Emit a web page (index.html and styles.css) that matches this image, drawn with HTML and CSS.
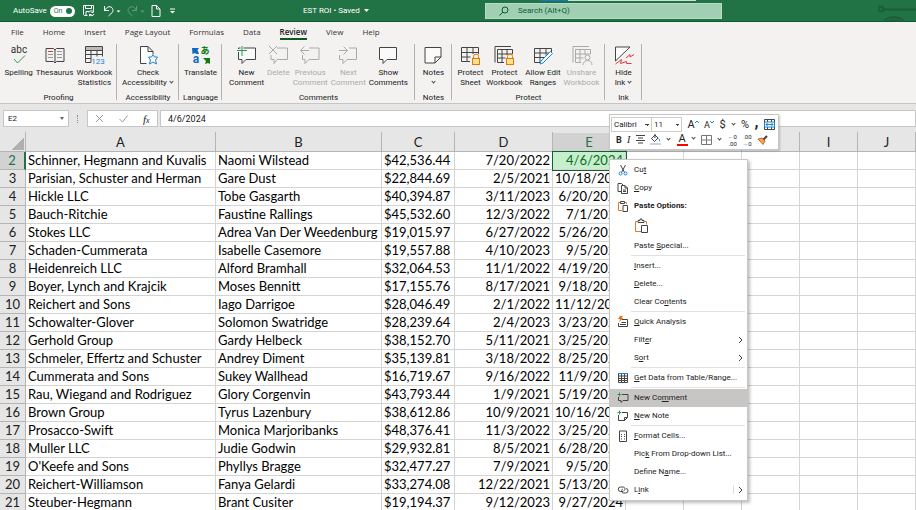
FILE: index.html
```
<!DOCTYPE html>
<html lang="en">
<head>
    <meta charset="UTF-8">
    <meta name="viewport" content="width=device-width, initial-scale=1.0">
    <title>EST ROI</title>
    <link rel="stylesheet" href="styles.css">
</head>
<body>
    <header class="titlebar">
        <div class="quick">
            <label class="autosave">AutoSave
                <span class="switch"><input type="checkbox" checked><span>On</span></span>
            </label>
            <button class="quick-btn" aria-label="Save">
                <svg width="12" height="12" viewBox="0 0 12 12"><path d="M4.5 10.5h-3l-1-1v-9h10v5M2.500.5v3h6v-3M3 10V6.500h3M6 7.500a2.500 2.500 0 0 1 4.500-.5v-1.500M10.500 7.500h-2M11 9a2.500 2.500 0 0 1-4.500.5v1.800M6.500 9.500h2"/></svg>
            </button>
            <button class="quick-btn" aria-label="Undo">
                <svg width="16" height="12" viewBox="0 0 16 12"><path d="M1.500 1v4.500H6M1.500 5.500C4 1 8 .8 9.500 3.500s-.5 4.500-4 7.500"/><path class="solid" d="M13.500 5.500h4l-2 2z"/></svg>
            </button>
            <button class="quick-btn" aria-label="Redo" disabled>
                <svg width="16" height="12" viewBox="0 0 16 12"><path d="M9.500 1v4.500H5M9.500 5.500C7 1 3 .8 1.500 3.500s.5 4.500 4 7.500"/><path class="solid" d="M13.500 5.500h4l-2 2z"/></svg>
            </button>
            <button class="quick-btn" aria-label="New">
                <svg width="10" height="12" viewBox="0 0 10 12"><path d="M1 .5h4.500l3.500 3.500v7.500H1zM5.500.5V4H9"/></svg>
            </button>
            <button class="quick-btn" aria-label="Customize toolbar">
                <svg width="7" height="6" viewBox="0 0 7 6"><path d="M1 1h5"/><path class="solid" d="M1 3h5L3.500 5.500z"/></svg>
            </button>
        </div>
        <h1 class="doc-title">EST ROI • Saved <svg width="5" height="3" viewBox="0 0 5 3"><path class="solid" d="M0 0h5L2.500 3z"/></svg></h1>
        <label class="search">
            <svg width="10" height="10" viewBox="0 0 10 10"><circle cx="6" cy="4" r="3"/><path d="M4 6 .5 9.500"/></svg>
            <input type="text" placeholder="Search (Alt+Q)" aria-label="Search">
        </label>
        <svg class="circuit" width="38" height="22" viewBox="0 0 38 22"><circle cx="3" cy="9" r="2.500"/><path d="M6 9.500h32"/><path d="M6 22a11 8 0 0 1 20 0M11 20.500h10"/></svg>
    </header>

    <nav class="tabs">
        <a href="#">File</a>
        <a href="#">Home</a>
        <a href="#">Insert</a>
        <a href="#">Page Layout</a>
        <a href="#">Formulas</a>
        <a href="#">Data</a>
        <a href="#" class="active">Review</a>
        <a href="#">View</a>
        <a href="#">Help</a>
    </nav>

    <div class="ribbon">
        <section class="group proofing">
            <div class="tools">
                <button class="tool">
                    <svg width="20" height="20" viewBox="0 0 20 20"><text x="10" y="8" text-anchor="middle">abc</text><path class="green" d="M5 14l3.500 4L16 10.500"/></svg>
                    Spelling
                </button>
                <button class="tool">
                    <svg width="20" height="20" viewBox="0 0 20 20"><path d="M1 3.500h7.500L10 5l1.500-1.500H19v13h-7.500L10 18l-1.500-1.500H1zM10 5v12"/><path d="M3 9.500h5M3 12.500h5M12 6.500h5M12 9.500h5M12 12.500h5" stroke="#999"/><path class="red" d="M3 6.500h5"/></svg>
                    Thesaurus
                </button>
                <button class="tool">
                    <svg width="20" height="20" viewBox="0 0 20 20"><path d="M2 3.500h16" stroke="#bbb" stroke-width="3"/><path d="M7 17.500H1.500v-16h17v10M1.500 5.500h17M1.500 9.500h17M1.500 13.500H7M7 5.500v12M13 5.500v6"/><text class="blue-text" x="14" y="19" text-anchor="middle">123</text></svg>
                    Workbook<br>Statistics
                </button>
            </div>
            <h2>Proofing</h2>
        </section>
        <section class="group access">
            <div class="tools">
                <button class="tool">
                    <svg width="20" height="20" viewBox="0 0 20 20"><path fill="#fff" d="M8.500 18.500H2.500v-17H10l5 5V9M10 1.500v5h5"/><path class="blue" fill="#fff" d="M15 9.500l1.500 2.500h3l-2 3 1 4-3.500-2-3.500 2 1-4-2-3h3z"/></svg>
                    Check<br>Accessibility <i class="caret"></i>
                </button>
            </div>
            <h2>Accessibility</h2>
        </section>
        <section class="group language">
            <div class="tools">
                <button class="tool">
                    <svg width="20" height="20" viewBox="0 0 20 20"><path d="M1 3h7L6.500 5 8 9H5.500L4 8 1.500 9z" fill="#1068bf" stroke="none"/><text class="kana" x="14" y="9" text-anchor="middle">あ</text><text class="latin-a" x="5" y="18" text-anchor="middle">a</text><path d="M12 13h7v6l-2-1-3 1 1-3z" fill="#107c10" stroke="none"/></svg>
                    Translate
                </button>
            </div>
            <h2>Language</h2>
        </section>
        <section class="group comments">
            <div class="tools">
                <button class="tool">
                    <svg width="20" height="20" viewBox="0 0 20 20"><path fill="#fafafa" d="M1.500 3h17v11.500H9L5 18.500v-4H1.500z"/><path class="halo" d="M0 5.500h10M5 1v10"/><path class="green" d="M0 5.500h10M5 1v10"/></svg>
                    New<br>Comment
                </button>
                <button class="tool" disabled>
                    <svg width="20" height="20" viewBox="0 0 20 20"><path d="M9 3h10.500v11.500H9L6 18.500v-4H3V10"/><path d="M1 1l8 8M9 1 1 9"/></svg>
                    Delete
                </button>
                <button class="tool" disabled>
                    <svg width="20" height="20" viewBox="0 0 20 20"><path d="M9 3h10v11.500H9L5 18.500v-4H2.500V10"/><path d="M9 5.500H.5M4.500 1.500l-4 4 4 4"/></svg>
                    Previous<br>Comment
                </button>
                <button class="tool" disabled>
                    <svg width="20" height="20" viewBox="0 0 20 20"><path d="M11 3h7.500v11.500H9L5 18.500v-4H1.500V10"/><path d="M1 5.500h8.500M5.500 1.500l4 4-4 4"/></svg>
                    Next<br>Comment
                </button>
                <button class="tool">
                    <svg width="20" height="20" viewBox="0 0 20 20"><path fill="#fafafa" d="M1.500 2.500h17v12H9L5 18.500v-4H1.500z"/></svg>
                    Show<br>Comments
                </button>
            </div>
            <h2>Comments</h2>
        </section>
        <section class="group notes">
            <div class="tools">
                <button class="tool">
                    <svg width="20" height="20" viewBox="0 0 20 20"><path fill="#fafafa" d="M2 2.500h16v9.500l-6 6H2zM12 18v-6h6"/></svg>
                    Notes<br><i class="caret"></i>
                </button>
            </div>
            <h2>Notes</h2>
        </section>
        <section class="group protect">
            <div class="tools">
                <button class="tool">
                    <svg width="20" height="20" viewBox="0 0 20 20"><path d="M10 16.500H1.500v-14h17V9M1.500 7.500h17M1.500 12h9M7 2.500v14M13 2.500V9"/><rect class="lock" x="12.500" y="13.500" width="7" height="6"/><path class="lock-bar" d="M13.500 13.500v-2a2.500 2.500 0 0 1 5 0v2"/></svg>
                    Protect<br>Sheet
                </button>
                <button class="tool">
                    <svg width="20" height="20" viewBox="0 0 20 20"><path d="M1 17.500v-16h16M10 17.500H3.500v-13h15V9M3.500 9h15M3.500 13h8M8 4.500v13M13 4.500V10"/><rect class="lock" x="12.500" y="13.500" width="7" height="6"/><path class="lock-bar" d="M13.500 13.500v-2a2.500 2.500 0 0 1 5 0v2"/></svg>
                    Protect<br>Workbook
                </button>
                <button class="tool">
                    <svg width="20" height="20" viewBox="0 0 20 20"><path d="M8 17.500H1.500v-14h17v4M1.500 8h15M1.500 12.500H11M7 3.500v14M13 3.500v7"/><path class="blue" fill="#fff" d="M17.500 6.500l2 2-9.500 9.500-3 1 1-3z"/></svg>
                    Allow Edit<br>Ranges
                </button>
                <button class="tool" disabled>
                    <svg width="20" height="20" viewBox="0 0 20 20"><path d="M1 17.500v-16h16M9 17.500H3.500v-13h15V9M3.500 9h15M3.500 13h8M8 4.500v13M13 4.500V10"/><circle cx="15.500" cy="12.500" r="2.500"/><path d="M11 20a4.500 4.500 0 0 1 9 0"/></svg>
                    Unshare<br>Workbook
                </button>
            </div>
            <h2>Protect</h2>
        </section>
        <section class="group ink">
            <div class="tools">
                <button class="tool">
                    <svg width="20" height="20" viewBox="0 0 20 20"><path fill="#fff" d="M1.500 2v14L16 2z"/><path class="red" d="M1.500 19l6-4.500-1 4 6-2v2h5M12 13l4-3.500v2.500l4-2.500"/></svg>
                    Hide<br>Ink <i class="caret"></i>
                </button>
            </div>
            <h2>Ink</h2>
        </section>
    </div>

    <div class="formula-bar">
        <div class="name-box">
            <input type="text" value="E2" aria-label="Name box">
            <i class="arrow"></i>
        </div>
        <span class="dots"></span>
        <div class="entry-buttons">
            <button aria-label="Cancel" disabled><svg width="9" height="9" viewBox="0 0 9 9"><path d="M1 1l7 7M8 1 1 8"/></svg></button>
            <button aria-label="Enter" disabled><svg width="9" height="9" viewBox="0 0 9 9"><path d="M.5 5l3 3L8.500 1.500"/></svg></button>
            <button class="fx" aria-label="Insert function">f<small>x</small></button>
        </div>
        <input class="formula" type="text" value="4/6/2024" aria-label="Formula">
    </div>

    <main class="sheet">
        <table>
            <colgroup>
                <col class="col-head"><col class="col-a"><col class="col-b"><col class="col-c"><col class="col-d"><col class="col-e">
                <col class="col-std"><col class="col-std"><col class="col-std"><col class="col-std"><col class="col-std"><col>
            </colgroup>
            <thead>
                <tr>
                    <th class="corner"></th>
                    <th>A</th><th>B</th><th>C</th><th>D</th><th class="current">E</th>
                    <th>F</th><th>G</th><th>H</th><th>I</th><th>J</th><th></th>
                </tr>
            </thead>
            <tbody id="rows"></tbody>
        </table>

        <div class="mini-bar">
            <div class="mini-row">
                <div class="fonts">
                    <select class="font-name" aria-label="Font"><option>Calibri</option></select>
                    <select class="font-size" aria-label="Font size"><option>11</option></select>
                </div>
                <button aria-label="Increase font size">A<svg class="blue" width="4" height="10" viewBox="0 0 4 10"><path d="M0 3l2-2 2 2"/></svg></button>
                <button class="smaller" aria-label="Decrease font size">A<svg class="blue" width="4" height="10" viewBox="0 0 4 10"><path d="M0 1l2 2 2-2"/></svg></button>
                <button class="with-caret">$ <i class="caret"></i></button>
                <button>%</button>
                <button class="comma">,</button>
                <button aria-label="Merge"><svg width="11" height="11" viewBox="0 0 11 11"><path d="M.5.5h10v10H.5zM3.500.5V3M7.500.5V3M3.500 8v2.500M7.500 8v2.500"/><path fill="#fff" class="blue" d="M.5 3h10v5H.5zM2 5.500h7M3.500 4 2 5.500 3.500 7M7.500 4 9 5.500 7.500 7"/></svg></button>
            </div>
            <div class="mini-row second">
                <button class="bold">B</button>
                <button class="italic">I</button>
                <button aria-label="Center"><svg width="9" height="9" viewBox="0 0 9 9"><path d="M0 .5h9M2 3h5M0 5.500h9M2 8h5"/></svg></button>
                <button class="with-caret" aria-label="Fill color"><svg width="11" height="11" viewBox="0 0 11 11"><path d="M5 1 1.500 4.500l3 3L8 4zM5 0v4"/><path class="blue" d="M8.500 4.500c1.500 1 1 3 .5 3"/><path d="M0 10h11" stroke="#bdd7ee" stroke-width="2"/></svg><i class="caret"></i></button>
                <button class="with-caret font-color">A <i class="caret"></i></button>
                <button class="with-caret" aria-label="Borders"><svg width="11" height="10" viewBox="0 0 11 10"><path d="M.5.5h10v9H.5zM5.500.5v9M.5 5h10" stroke="#777"/></svg><i class="caret"></i></button>
                <button class="decimal"><span><b>←</b>0</span><span>.00</span></button>
                <button class="decimal"><span>.00</span><span><b>→</b>0</span></button>
                <button aria-label="Format painter"><svg width="11" height="10" viewBox="0 0 11 10"><path d="M1 4l4-1 3 3-2 3.500z" fill="#f4a456" stroke="#d8641c"/><path d="M5 3l3 3" stroke="#d8641c"/><path d="M6.500 4.500 10 1" stroke-width="2"/></svg></button>
            </div>
        </div>

        <menu class="context">
            <li><button><svg width="12" height="12" viewBox="0 0 12 12"><path d="M3.500 1l4 7.500M8.500 1l-4 7.500"/><g class="blue"><circle cx="3.500" cy="9.500" r="1.500"/><circle cx="8.500" cy="9.500" r="1.500"/></g></svg><span>Cu<u>t</u></span></button></li>
            <li><button><svg width="12" height="12" viewBox="0 0 12 12"><path d="M4 9.500H1v-8h3.500L6 3M4.500 3.500H8L10.500 6v5.500h-6zM8 3.500V6h2.500M6 8h3M6 9.500h3"/></svg><span><u>C</u>opy</span></button></li>
            <li class="heading"><svg width="12" height="12" viewBox="0 0 12 12"><path class="orange" d="M5 10.500H1.500v-8h2M7.500 2.500h2V4"/><path d="M3.500 3.500v-2h4v2zM6 5.500h4.500v6H6z"/></svg><span>Paste Options:</span></li>
            <li class="paste"><button aria-label="Paste"><svg width="16" height="16" viewBox="0 0 16 16"><path class="orange" d="M7 13.500H1.500v-10h2M10.500 3.500h2v3"/><path d="M4 4.500v-2h2V1h2v1.500h2v2zM7.500 7.500h6v7h-6z"/></svg></button></li>
            <li><button><span>Paste <u>S</u>pecial...</span></button></li>
            <li class="divided"><button><span><u>I</u>nsert...</span></button></li>
            <li><button><span><u>D</u>elete...</span></button></li>
            <li><button><span>Clear Co<u>n</u>tents</span></button></li>
            <li class="divided"><button><svg width="12" height="12" viewBox="0 0 12 12"><path d="M5 3.500h5.500v7H1.500V7M3 8.500h6M4.500 6.500H9"/><path d="M3 0h3L4.500 2h2L2 6l1-3H1z" fill="#e8731c" stroke="none"/></svg><span><u>Q</u>uick Analysis</span></button></li>
            <li><button><span>Filt<u>e</u>r</span><svg class="more" width="5" height="8" viewBox="0 0 5 8"><path d="M1 1l3 3-3 3"/></svg></button></li>
            <li><button><span>S<u>o</u>rt</span><svg class="more" width="5" height="8" viewBox="0 0 5 8"><path d="M1 1l3 3-3 3"/></svg></button></li>
            <li class="divided"><button><svg width="12" height="12" viewBox="0 0 12 12"><path d="M1.500 1.500h9v9h-9zM1.500 4h9M1.500 6.500h9M1.500 8.500h9M4.500 1.500v9M7.500 1.500v9"/><path class="blue" d="M1 1.500h10"/></svg><span><u>G</u>et Data from Table/Range...</span></button></li>
            <li class="divided selected"><button><svg width="12" height="12" viewBox="0 0 12 12"><path d="M5 2.500h6v6H6l-2 2v-2H1.500V5"/><path class="green" d="M.5 2.500h4M2.500.5v4"/></svg><span>New Co<u>m</u>ment</span></button></li>
            <li><button><svg width="12" height="12" viewBox="0 0 12 12"><path d="M5 2.500h5.500v5l-3 3h-6V5M7.500 10.500v-3h3"/><path class="green" d="M.5 2.500h4M2.500.5v4"/></svg><span><u>N</u>ew Note</span></button></li>
            <li class="divided"><button><svg width="12" height="12" viewBox="0 0 12 12"><path d="M2.500 1h7v10.500h-7zM4 4.500h1M7 4.500h1M4 6.500h1M7 6.500h1M4 9h1M7 9h1"/></svg><span><u>F</u>ormat Cells...</span></button></li>
            <li><button><span>Pic<u>k</u> From Drop-down List...</span></button></li>
            <li><button><span>Define N<u>a</u>me...</span></button></li>
            <li><button><svg width="12" height="12" viewBox="0 0 12 12"><path d="M6 7.500H3.500a2 2 0 0 1 0-4.500H6c2.500 0 2.500 3.500.5 4M6 5c-2 .5-2 4 .5 4H8.500a2 2 0 0 0 .5-4.500"/></svg><span>L<u>i</u>nk</span><svg class="more split" width="5" height="8" viewBox="0 0 5 8"><path d="M1 1l3 3-3 3"/></svg></button></li>
        </menu>
    </main>

    <script src="script.js"></script>
</body>
</html>
```
FILE: styles.css
```
* {
    box-sizing: border-box;
}
body {
    margin: 0;
    height: 100vh;
    overflow: hidden;
    display: flex;
    flex-direction: column;
    font-family: Roboto, "Noto Sans", sans-serif;
    font-size: 8px;
    line-height: 10px;
    color: #222;
    background: #e6e6e6;
}
button, input, select {
    font: inherit;
    color: inherit;
    padding: 0;
    border: none;
    background: none;
}
button {
    white-space: nowrap;
}
svg {
    fill: none;
    stroke: #444;
    flex: none;
    overflow: visible;
}
svg text {
    stroke: none;
    fill: #333;
    font-size: 10px;
}
svg .blue-text {
    fill: #1c86d1;
    font-size: 8px;
}
svg .kana {
    fill: #107c10;
    font: bold 9px "Noto Sans CJK JP", sans-serif;
}
svg .latin-a {
    fill: #1068bf;
    font-size: 12px;
    font-weight: bold;
}
.blue {
    stroke: #1c86d1;
}
.green {
    stroke: #2b9a50;
}
.red {
    stroke: #e03a3e;
}
.orange {
    stroke: #e07a28;
}
.halo {
    stroke: #f3f2f1;
    stroke-width: 3;
}
.lock {
    stroke: #e07a10;
    fill: #fce08a;
}
.lock-bar {
    stroke: #e07a10;
}
.caret {
    display: inline-block;
    width: 3px;
    height: 3px;
    border: solid #444;
    border-width: 0 1px 1px 0;
    transform: rotate(45deg);
    margin: 0 1px 2px;
}

/* title bar */
.titlebar {
    position: relative;
    flex: none;
    height: 22px;
    display: grid;
    grid-template-columns: 303fr 182fr 237fr 194fr;
    align-items: center;
    color: #fff;
    background: linear-gradient(90deg, transparent 59%, #1878c8 59% 62%, #cfe0d6 62% 76%, transparent 76%) top / 100% 1px no-repeat #217346;
    border-bottom: 1px solid #0b5c2c;
}
.titlebar svg {
    stroke: #fff;
}
.titlebar .solid {
    fill: #fff;
    stroke: none;
}
.quick {
    display: flex;
    align-items: center;
    gap: 8px;
    padding-left: 13px;
}
.autosave {
    display: flex;
    align-items: center;
    gap: 3px;
}
.switch {
    display: flex;
    align-items: center;
    flex-direction: row-reverse;
    justify-content: space-between;
    width: 25px;
    height: 11px;
    padding: 0 3px 0 4px;
    border-radius: 6px;
    background: #fff;
    color: #217346;
    font-size: 7px;
}
.switch input {
    appearance: none;
    width: 6px;
    height: 6px;
    margin: 0;
    border-radius: 50%;
    background: #217346;
}
.quick-btn {
    display: flex;
}
.quick-btn:disabled {
    opacity: 0.3;
}
.doc-title {
    margin: 0;
    font-size: 8px;
    font-weight: normal;
}
.doc-title svg {
    margin: 0 0 1px 2px;
}
.search {
    display: flex;
    align-items: center;
    gap: 9px;
    height: 16px;
    padding-left: 13px;
    color: #0b5c2c;
    background: #a0cfb4;
    border: 1px solid #b5dcc5;
}
.search svg {
    stroke: #0b5c2c;
}
.search input {
    flex: 1;
    min-width: 0;
}
.search input::placeholder {
    color: #0b5c2c;
    opacity: 1;
}
.titlebar .circuit {
    justify-self: end;
    overflow: hidden;
    stroke: #1b5e3b;
    stroke-width: 2;
}

/* tabs */
.tabs {
    flex: none;
    display: flex;
    gap: 19px;
    height: 21px;
    padding: 4px 11px 0;
    font-family: "Open Sans", sans-serif;
    line-height: 12px;
    background: #f3f2f1;
}
.tabs a {
    color: #333;
    text-decoration: none;
    height: 14px;
}
.tabs .active {
    color: #222;
    font-weight: 600;
    border-bottom: 2px solid #0b5c1c;
}

/* ribbon */
.ribbon {
    flex: none;
    display: flex;
    height: 60px;
    background: #f3f2f1;
}
.group {
    position: relative;
    display: flex;
    flex-direction: column;
    justify-content: space-between;
    align-items: center;
}
.group::after {
    content: "";
    position: absolute;
    top: 1px;
    right: 0;
    bottom: 3px;
    border-right: 1px solid #b5b3b1;
}
.group h2 {
    margin: 0;
    font-size: 8px;
    font-weight: normal;
}
.proofing {
    width: 117px;
}
.access {
    width: 62px;
}
.language {
    width: 43px;
}
.comments {
    width: 193px;
}
.notes {
    width: 37px;
}
.protect {
    width: 153px;
}
.ink {
    width: 37px;
}
.tools {
    display: flex;
    align-items: flex-start;
    gap: 3px;
    padding-top: 2px;
}
.tool {
    text-align: center;
}
.tool svg {
    display: block;
    margin: 0 auto 3px;
}
.tool:disabled {
    color: #aaa;
}
.tool:disabled svg {
    stroke: #aaa;
}

/* formula bar */
.formula-bar {
    flex: none;
    display: flex;
    height: 24px;
    padding: 6px 0 0 3px;
    font-size: 8px;
    border-top: 1px solid #c8c6c4;
    background: #e6e6e6;
}
.name-box {
    display: flex;
    align-items: center;
    width: 66px;
    height: 17px;
    padding: 0 4px;
    background: #fff;
    border: 1px solid #c6c6c6;
}
.name-box input {
    flex: 1;
    min-width: 0;
}
.arrow {
    border: solid transparent;
    border-width: 3px 2px 0;
    border-top-color: #666;
}
.dots {
    width: 2px;
    margin: 5px 8px;
    height: 8px;
    border-left: 1px dotted #888;
}
.entry-buttons {
    display: flex;
    justify-content: space-around;
    align-items: center;
    width: 71px;
    height: 17px;
    background: #fff;
    border: 1px solid #c6c6c6;
}
.entry-buttons svg {
    display: block;
    stroke: #999;
}
.fx {
    font: italic 11px "Liberation Serif", serif;
}
.fx small {
    font-size: 8px;
}
.formula {
    flex: 1;
    min-width: 0;
    height: 17px;
    margin-left: 2px;
    padding-left: 7px;
    font-size: 9px;
    background: #fff;
    border: 1px solid #c6c6c6;
}

/* grid */
.sheet {
    position: relative;
    flex: 1;
    min-height: 0;
}
table {
    width: 100%;
    table-layout: fixed;
    border-collapse: separate;
    border-spacing: 0;
    font-family: Lato, sans-serif;
    font-size: 13px;
    line-height: 17px;
    color: #000;
    background: #fff;
}
.col-head {
    width: 26px;
}
.col-a {
    width: 190px;
}
.col-b {
    width: 166px;
}
.col-c {
    width: 73px;
}
.col-d {
    width: 98px;
}
.col-e {
    width: 73px;
}
.col-std {
    width: 58px;
}
th, td {
    height: 18px;
    padding: 0 2px;
    border: solid #d4d4d4;
    border-width: 0 1px 1px 0;
    white-space: nowrap;
    text-align: left;
}
th {
    padding: 0;
    font-weight: normal;
    text-align: center;
    color: #222;
    background: #e6e6e6;
    border-color: #b5b5b5;
}
thead th {
    height: 25px;
    padding-top: 7px;
    border-bottom-color: #a0a0a0;
    border-image: linear-gradient(transparent 25%, #b5b5b5 25%) 1;
}
.corner {
    background: linear-gradient(135deg, transparent 50%, #b0b0b0 50%) 11px 10px / 13px 13px no-repeat #e6e6e6;
}
.current {
    color: #217346;
    background: #d2d2d2;
}
thead .current {
    background: linear-gradient(#e6e6e6 6px, #d2d2d2 6px);
}
tbody .current {
    border-right: 2px solid #217346;
}
td.num {
    text-align: right;
}
td.money {
    text-align: right;
    padding-right: 6px;
}
td.picked {
    color: #0b6b1c;
    background: #c6efce;
    outline: 1px solid #14602f;
}

/* mini toolbar */
.mini-bar {
    position: absolute;
    top: -13px;
    left: 609px;
    width: 170px;
    height: 36px;
    padding: 2px 3px 2px 1px;
    background: #fff;
    border: 1px solid #c6c6c6;
    box-shadow: 1px 1px 2px rgba(0, 0, 0, 0.2);
}
.mini-row {
    display: flex;
    align-items: center;
    justify-content: space-between;
    height: 15px;
}
.mini-row button {
    display: flex;
    align-items: center;
    font-size: 11px;
}
.mini-row .smaller {
    font-size: 9px;
}
.mini-row .with-caret {
    gap: 5px;
}
.fonts {
    display: flex;
}
.fonts select {
    appearance: none;
    height: 15px;
    padding-left: 2px;
    border: 1px solid #ccc;
    background: conic-gradient(from -45deg at 50% 100%, #444 90deg, transparent 0) right 2px center / 4px 2px no-repeat;
}
.fonts .font-name {
    width: 41px;
}
.fonts .font-size {
    width: 30px;
    border-left: none;
}
.mini-row .comma {
    font-size: 16px;
    font-weight: bold;
    padding-bottom: 6px;
}
.mini-row .bold {
    font-size: 9px;
    font-weight: bold;
}
.mini-row .italic {
    font: italic 10px "Liberation Serif", serif;
}
.second {
    padding: 0 7px 0 5px;
}
.mini-row .font-color {
    height: 12px;
    background: linear-gradient(red, red) left bottom / 11px 2px no-repeat;
    padding: 0 0 2px 2px;
}
.mini-row .decimal {
    flex-direction: column;
    align-items: flex-end;
    font-size: 6px;
    line-height: 7px;
}
.decimal b {
    color: #1c86d1;
}

/* context menu */
.context {
    position: absolute;
    top: 32px;
    left: 609px;
    width: 139px;
    margin: 0;
    padding: 1px 0;
    list-style: none;
    background: #fff;
    border: 1px solid #c6c6c6;
    box-shadow: 2px 2px 3px rgba(0, 0, 0, 0.25);
}
.context button, .heading {
    display: grid;
    grid-template-columns: 12px 1fr auto;
    align-items: center;
    gap: 5px;
    width: 100%;
    height: 18px;
    padding: 0 4px 0 7px;
    text-align: left;
}
.context span {
    grid-column: 2;
    grid-row: 1;
}
.context svg {
    grid-column: 1;
    grid-row: 1;
}
.context .more {
    grid-column: 3;
}
.heading {
    font-weight: bold;
}
.context .paste button {
    height: 22px;
}
.context .paste svg {
    grid-column: 2;
}
.divided::before {
    content: "";
    display: block;
    height: 1px;
    margin: 0 2px 1px 21px;
    background: #e1e1e1;
}
.selected button {
    background: #c8c6c4;
}
.context .split {
    box-sizing: content-box;
    padding-left: 4px;
    border-left: 1px solid #ddd;
}
```
FILE: script.js
```
const data = [
    ["Schinner, Hegmann and Kuvalis", "Naomi Wilstead", "$42,536.44", "7/20/2022", "4/6/2024"],
    ["Parisian, Schuster and Herman", "Gare Dust", "$22,844.69", "2/5/2021", "10/18/2024"],
    ["Hickle LLC", "Tobe Gasgarth", "$40,394.87", "3/11/2023", "6/20/2024"],
    ["Bauch-Ritchie", "Faustine Rallings", "$45,532.60", "12/3/2022", "7/1/2024"],
    ["Stokes LLC", "Adrea Van Der Weedenburg", "$19,015.97", "6/27/2022", "5/26/2024"],
    ["Schaden-Cummerata", "Isabelle Casemore", "$19,557.88", "4/10/2023", "9/5/2024"],
    ["Heidenreich LLC", "Alford Bramhall", "$32,064.53", "11/1/2022", "4/19/2024"],
    ["Boyer, Lynch and Krajcik", "Moses Bennitt", "$17,155.76", "8/17/2021", "9/18/2024"],
    ["Reichert and Sons", "Iago Darrigoe", "$28,046.49", "2/1/2022", "11/12/2024"],
    ["Schowalter-Glover", "Solomon Swatridge", "$28,239.64", "2/4/2023", "3/23/2024"],
    ["Gerhold Group", "Gardy Helbeck", "$38,152.70", "5/11/2021", "3/25/2024"],
    ["Schmeler, Effertz and Schuster", "Andrey Diment", "$35,139.81", "3/18/2022", "8/25/2024"],
    ["Cummerata and Sons", "Sukey Wallhead", "$16,719.67", "9/16/2022", "11/9/2024"],
    ["Rau, Wiegand and Rodriguez", "Glory Corgenvin", "$43,793.44", "1/9/2021", "5/19/2024"],
    ["Brown Group", "Tyrus Lazenbury", "$38,612.86", "10/9/2021", "10/16/2024"],
    ["Prosacco-Swift", "Monica Marjoribanks", "$48,376.41", "11/3/2022", "3/25/2024"],
    ["Muller LLC", "Judie Godwin", "$29,932.81", "8/5/2021", "6/28/2024"],
    ["O'Keefe and Sons", "Phyllys Bragge", "$32,477.27", "7/9/2021", "9/5/2024"],
    ["Reichert-Williamson", "Fanya Gelardi", "$33,274.08", "12/22/2021", "5/13/2024"],
    ["Steuber-Hegmann", "Brant Cusiter", "$19,194.37", "9/12/2023", "9/27/2024"]
];
const classes = ["", "", "money", "num", "num"];

const rows = document.getElementById("rows");
data.forEach((record, i) => {
    const tr = rows.insertRow();
    const head = document.createElement("th");
    head.textContent = i + 2;
    if (i === 0) head.className = "current";
    tr.append(head);
    record.forEach((value, c) => {
        const td = tr.insertCell();
        td.textContent = value;
        td.className = classes[c];
        if (i === 0 && c === 4) td.classList.add("picked");
    });
    for (let c = 0; c < 6; c++) tr.insertCell();
});
```
